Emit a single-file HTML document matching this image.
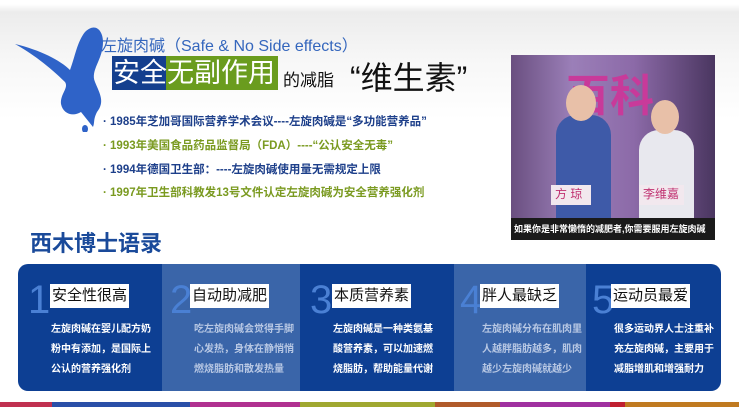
<!DOCTYPE html>
<html><head><meta charset="utf-8"><style>
*{margin:0;padding:0;box-sizing:border-box}
body{width:739px;height:407px;overflow:hidden;position:relative;background:linear-gradient(#fff 0,#fff 4px,#ececec 12px,#f7f7f7 60px,#fff 120px);font-family:"Liberation Sans","Noto Sans CJK SC",sans-serif}
.a{position:absolute;white-space:nowrap}
.bul{font-size:11.5px;left:103px;font-weight:bold}
.col{position:absolute;top:264px;height:127px}
.num{position:absolute;top:14px;font-size:40px;color:#4a80d4;font-family:"Liberation Sans",sans-serif;line-height:44px}
.tag{position:absolute;top:20px;background:#fff;color:#111;font-size:15px;padding:1px 2px;line-height:22px}
.txt{position:absolute;top:56px;font-size:10px;line-height:20px;color:#fff;font-weight:bold}
</style></head><body>
<svg class="a" style="left:15px;top:22px" width="120" height="110" viewBox="0 0 120 110">
<path d="M0 22 C25 28 45 38 55 48 C60 35 62 20 70 10 C80 0 88 8 88 20 C88 38 75 48 80 60 C85 72 90 80 82 90 C78 98 80 100 78 105 C74 100 70 95 66 90 C58 95 48 92 46 82 C45 72 54 66 50 60 C35 45 15 30 0 22Z" fill="#2f63c8"/>
<ellipse cx="74" cy="117" rx="3" ry="4" fill="#2f63c8" transform="translate(-4,-10)"/>
</svg>
<div class="a" style="left:101px;top:32px;font-size:16px;color:#3466bd">左旋肉碱（Safe &amp; No Side effects）</div>
<div class="a" style="left:112px;top:56px;height:34px;width:54px;background:#143f8e"></div>
<div class="a" style="left:166px;top:56px;height:34px;width:112px;background:#6a9c1e"></div>
<div class="a" style="left:113px;top:57px;font-size:27px;color:#fff;line-height:32px">安全无副作用</div>
<div class="a" style="left:283px;top:66px;font-size:17px;color:#111">的减脂</div>
<div class="a" style="left:350px;top:53px;font-size:32px;color:#111">“维生素”</div>
<div class="a bul" style="top:113px;color:#1d3f8a">· 1985年芝加哥国际营养学术会议----左旋肉碱是“多功能营养品”</div>
<div class="a bul" style="top:137px;color:#7a9a20">· 1993年美国食品药品监督局（FDA）----“公认安全无毒”</div>
<div class="a bul" style="top:161px;color:#1d3f8a">· 1994年德国卫生部：----左旋肉碱使用量无需规定上限</div>
<div class="a bul" style="top:184px;color:#7a9a20">· 1997年卫生部科教发13号文件认定左旋肉碱为安全营养强化剂</div>
<div class="a" style="left:511px;top:55px;width:204px;height:185px;background:linear-gradient(90deg,#6a4f80,#9b7fb8 30%,#8c6aa8 60%,#4a3660);overflow:hidden">
<div class="a" style="left:55px;top:5px;font-size:44px;color:#c83a9a;font-weight:bold">百科</div>
<div class="a" style="left:45px;top:60px;width:55px;height:110px;background:#3e5aa8;border-radius:20px 20px 0 0"></div>
<div class="a" style="left:128px;top:75px;width:55px;height:100px;background:#e8e8ee;border-radius:20px 20px 0 0"></div>
<div class="a" style="left:55px;top:30px;width:30px;height:36px;background:#e8c0a8;border-radius:50%"></div>
<div class="a" style="left:140px;top:45px;width:28px;height:34px;background:#e8c0a8;border-radius:50%"></div>
<div class="a" style="left:40px;top:130px;width:40px;height:20px;background:#f2e8ee;color:#c03070;font-size:12px;padding-left:4px">方 琼</div>
<div class="a" style="left:128px;top:130px;width:45px;height:20px;background:#f2e8ee;color:#c03070;font-size:12px;padding-left:4px">李维嘉</div>
<div class="a" style="left:0;top:163px;width:204px;height:22px;background:#1a1a1a;color:#fff;font-size:9px;line-height:22px;padding-left:3px;font-weight:bold">如果你是非常懒惰的减肥者,你需要服用左旋肉碱</div>
</div>
<div class="a" style="left:30px;top:226px;font-size:22px;font-weight:bold;color:#1a4a9a">西木博士语录</div>
<div class="a" style="left:18px;top:264px;width:703px;height:127px;background:#0d3f93;border-radius:10px;overflow:hidden">
<div class="col" style="left:144px;top:0;width:138px;background:#3a65a9"></div>
<div class="col" style="left:436px;top:0;width:132px;background:#3a65a9"></div>
</div>
<div class="col" style="left:18px;width:144px"><div class="num" style="left:10px">1</div><div class="tag" style="left:32px">安全性很高</div><div class="txt" style="left:33px">左旋肉碱在婴儿配方奶<br>粉中有添加，是国际上<br>公认的营养强化剂</div></div>
<div class="col" style="left:162px;width:138px"><div class="num" style="left:8px">2</div><div class="tag" style="left:28px">自动助减肥</div><div class="txt" style="left:32px;color:#b8c8e4">吃左旋肉碱会觉得手脚<br>心发热，身体在静悄悄<br>燃烧脂肪和散发热量</div></div>
<div class="col" style="left:300px;width:154px"><div class="num" style="left:10px">3</div><div class="tag" style="left:32px">本质营养素</div><div class="txt" style="left:33px">左旋肉碱是一种类氨基<br>酸营养素，可以加速燃<br>烧脂肪，帮助能量代谢</div></div>
<div class="col" style="left:454px;width:132px"><div class="num" style="left:6px">4</div><div class="tag" style="left:26px">胖人最缺乏</div><div class="txt" style="left:28px;color:#b8c8e4">左旋肉碱分布在肌肉里<br>人越胖脂肪越多，肌肉<br>越少左旋肉碱就越少</div></div>
<div class="col" style="left:586px;width:135px"><div class="num" style="left:6px">5</div><div class="tag" style="left:25px">运动员最爱</div><div class="txt" style="left:28px">很多运动界人士注重补<br>充左旋肉碱，主要用于<br>减脂增肌和增强耐力</div></div>
<div class="a" style="left:0;top:402px;width:739px;height:5px;background:linear-gradient(90deg,#c03050 0 52px,#2a4fa8 52px 190px,#b03090 190px 300px,#a0a830 300px 435px,#b05a2a 435px 500px,#a030a0 500px 610px,#c02030 610px 625px,#c07a20 625px)"></div>
</body></html>
